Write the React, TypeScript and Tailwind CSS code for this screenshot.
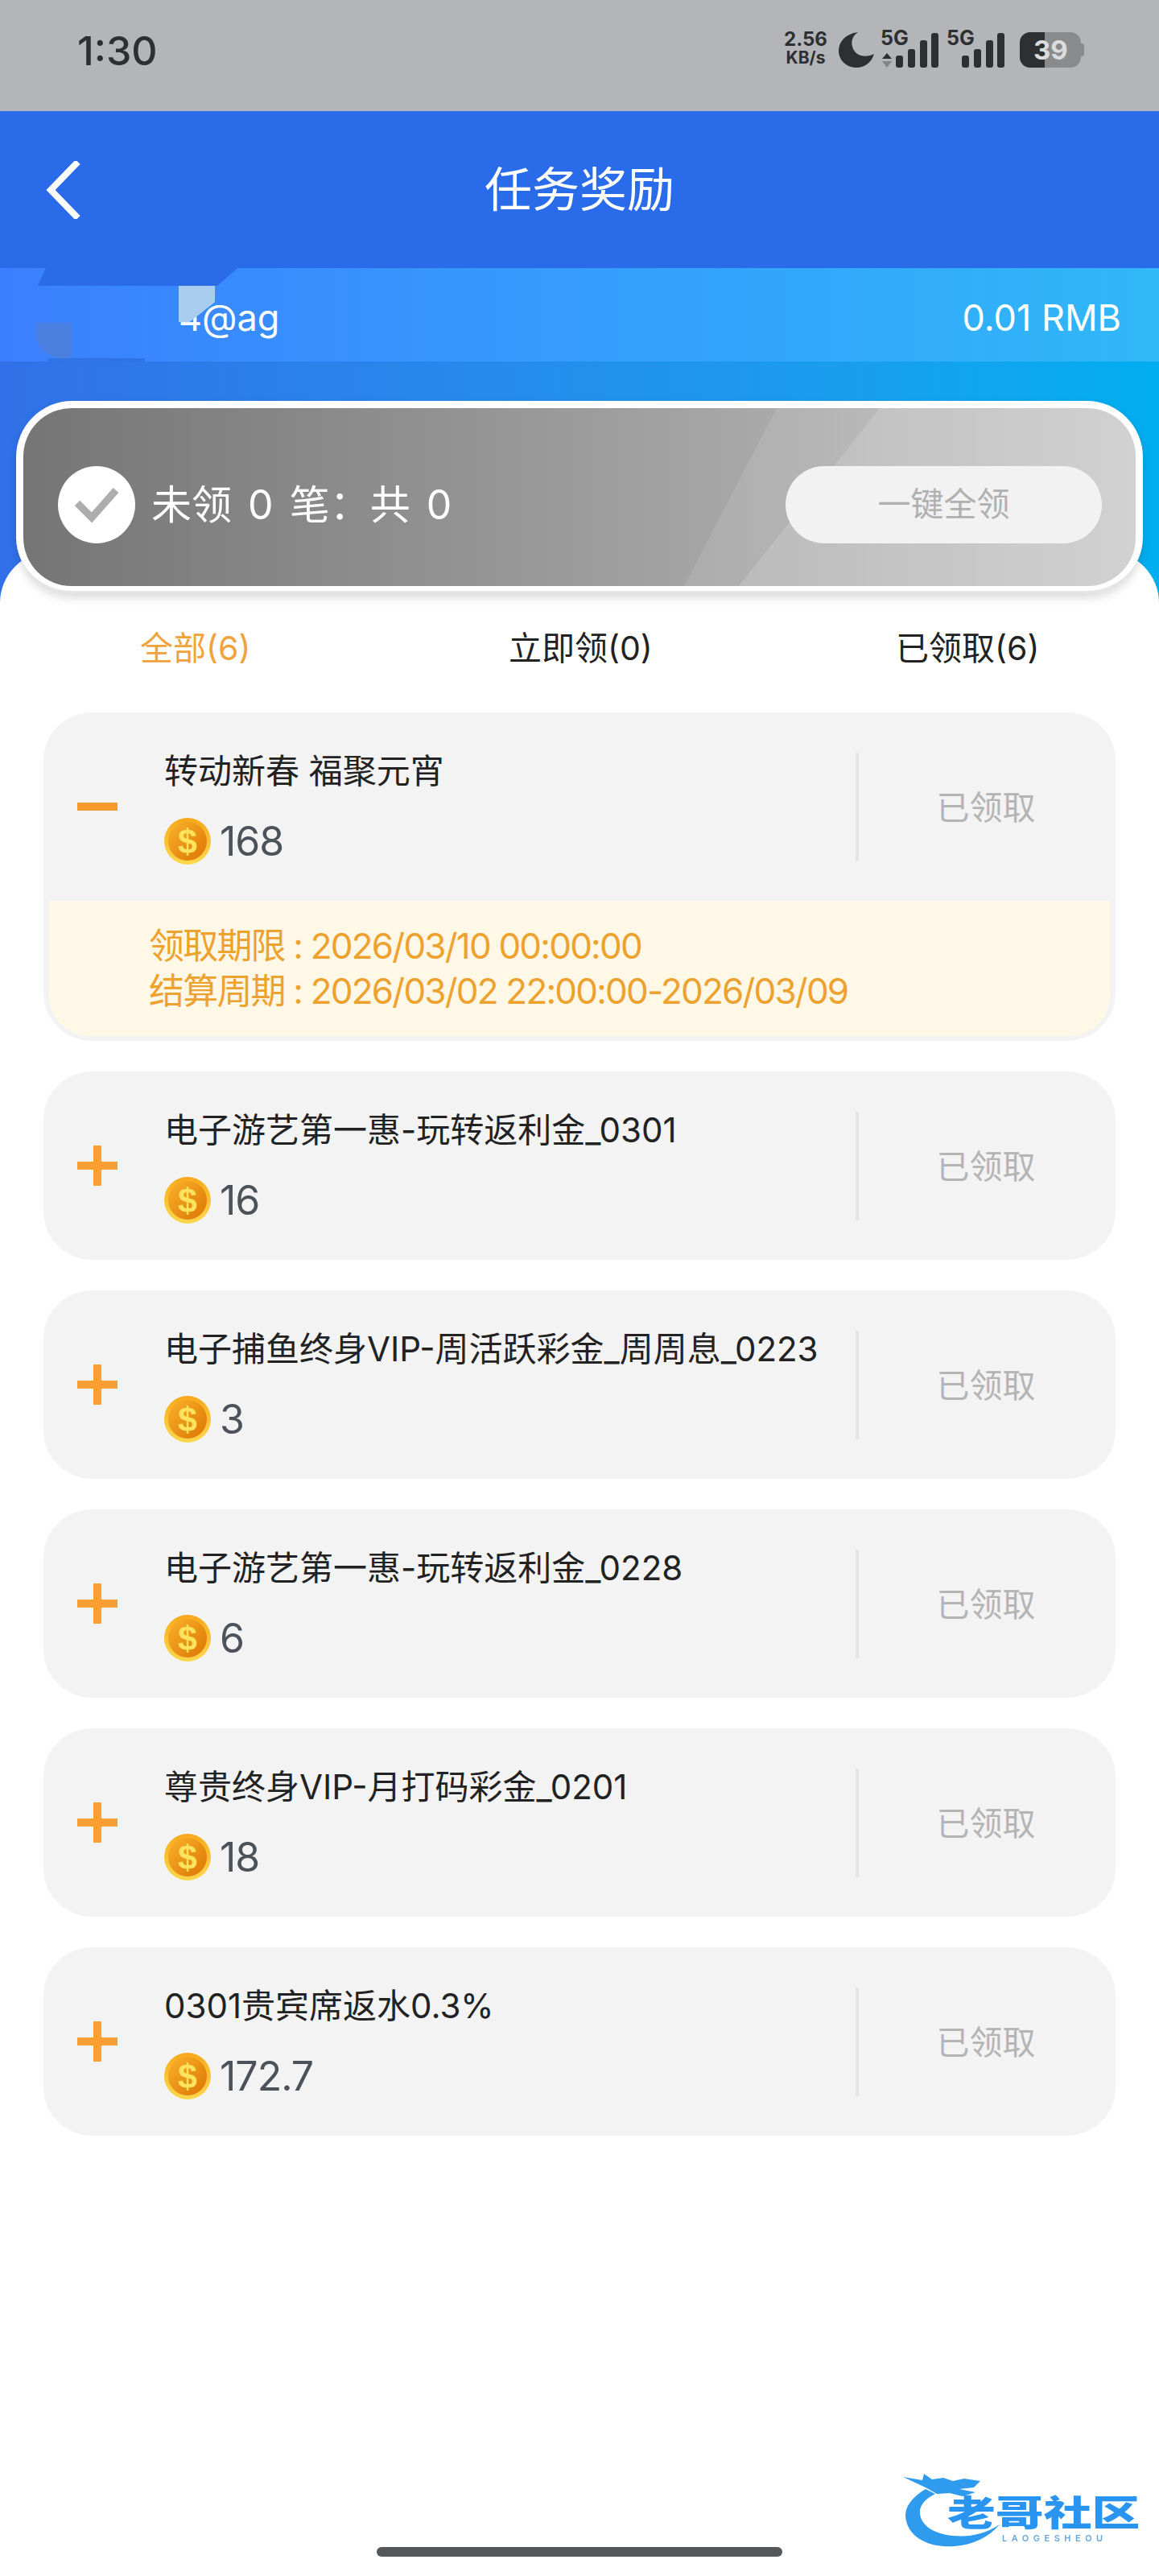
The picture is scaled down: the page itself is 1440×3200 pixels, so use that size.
import React from 'react';

const FONT = 'font-["Inter","Noto_Sans_CJK_SC",sans-serif]';

const rewards = [
  { title: '电子游艺第一惠-玩转返利金_0301', amount: '16' },
  { title: '电子捕鱼终身VIP-周活跃彩金_周周息_0223', amount: '3' },
  { title: '电子游艺第一惠-玩转返利金_0228', amount: '6' },
  { title: '尊贵终身VIP-月打码彩金_0201', amount: '18' },
  { title: '0301贵宾席返水0.3%', amount: '172.7' },
];

const SignalBars = ({ lead = false }: { lead?: boolean }) => (
  <svg width="72" height="44" viewBox="0 0 72 44" className="block">
    {lead && (
      <>
        <path d="M2 33 L8 26 L14 33 Z" fill="#2d2f30" />
        <path d="M2 36 L14 36 L8 44 Z" fill="#828486" />
      </>
    )}
    <rect x="19" y="29" width="9" height="15" rx="3" fill="#2d2f30" />
    <rect x="34" y="21" width="9" height="23" rx="3" fill="#2d2f30" />
    <rect x="49" y="10" width="9" height="34" rx="3" fill="#2d2f30" />
    <rect x="63" y="1" width="9" height="43" rx="3" fill="#2d2f30" />
  </svg>
);

const StatusIcons = () => (
  <div className="flex items-center text-[#2d2f30]">
    <div className="mt-[-4px] flex w-[58px] flex-col items-center font-bold leading-none">
      <span className="text-[24px] leading-[24px]">2.56</span>
      <span className="text-[21px] leading-[22px]">KB/s</span>
    </div>
    <svg width="44" height="44" viewBox="0 0 44 44" className="ml-[12px]">
      <path d="M24 0 C8 2 0 12 0 23 C0 35 10 44 22 44 C33 44 41 37 44 27 C32 33 20 29 17 18 C15 10 18 4 24 0 Z" fill="#2d2f30" />
    </svg>
    <div className="relative ml-[8px] h-[44px] w-[72px]">
      <SignalBars lead />
      <span className="absolute left-0 top-[-6px] text-[25px] font-bold leading-[26px]">5G</span>
    </div>
    <div className="relative ml-[10px] h-[44px] w-[72px]">
      <SignalBars />
      <span className="absolute left-0 top-[-6px] text-[25px] font-bold leading-[26px]">5G</span>
    </div>
    <div className="relative ml-[19px] flex h-[44px] w-[76px] overflow-hidden rounded-[13px] bg-[#8a8b8d]">
      <div className="h-full w-[31px] bg-[#2d2f30]" />
      <span className="absolute left-[17px] top-0 text-[33px] font-bold leading-[44px] text-[#dcdcdc]">39</span>
    </div>
    <div className="h-[16px] w-[4px] rounded-r-[3px] bg-[#8a8b8d]" />
  </div>
);

const Coin = ({ id }: { id: string }) => (
  <svg width="58" height="58" viewBox="0 0 58 58" className="shrink-0">
    <defs>
      <linearGradient id={`${id}-rim`} x1="0" y1="0" x2="0" y2="1">
        <stop offset="0" stopColor="#f7a91a" />
        <stop offset="1" stopColor="#ffd84e" />
      </linearGradient>
      <linearGradient id={`${id}-face`} x1="0" y1="0" x2="1" y2="1">
        <stop offset="0" stopColor="#f9b22a" />
        <stop offset="1" stopColor="#dc7403" />
      </linearGradient>
    </defs>
    <circle cx="29" cy="29" r="29" fill={`url(#${id}-rim)`} />
    <circle cx="29" cy="29" r="24" fill={`url(#${id}-face)`} />
    <text x="29" y="44" textAnchor="middle" fontSize="43" fontWeight="700" fill="#ffe25e" fontFamily="Liberation Sans, sans-serif">
      $
    </text>
  </svg>
);

const ToggleIcon = ({ open = false }: { open?: boolean }) => (
  <svg width="50" height="50" viewBox="0 0 50 50" className="ml-[42px] shrink-0">
    <rect x="0" y="20" width="50" height="10" fill={open ? '#f79a2d' : '#ff9f33'} />
    {!open && <rect x="20" y="0" width="10" height="50" fill="#ff9f33" />}
  </svg>
);

const RewardRow = ({ id, title, amount, open = false }: { id: string; title: string; amount: string; open?: boolean }) => (
  <div className="flex h-[234px] items-center">
    <ToggleIcon open={open} />
    <div className="ml-[58px] flex flex-1 flex-col">
      <div className="text-[42px] leading-[56px] text-[#222222]">{title}</div>
      <div className="mt-[30px] flex items-center gap-[11px]">
        <Coin id={id} />
        <span className="text-[50px] leading-[58px] tracking-[-1px] text-[#4c525a]">{amount}</span>
      </div>
    </div>
    <div className="flex h-[135px] w-[323px] items-center justify-center border-l-[4px] border-[#e4e4e4] pr-[3px] pt-[3px]">
      <span className="text-[41px] text-[#b4b4b4]">已领取</span>
    </div>
  </div>
);

const Logo = () => (
  <div className="absolute left-[1120px] top-[3066px] h-[104px] w-[304px] blur-[0.7px]">
    <svg width="304" height="104" viewBox="0 0 304 104" className="absolute inset-0">
      <path d="M30 26 C10 38 2 52 6 66 C12 90 40 99 66 97 C90 95 108 86 122 70 C104 82 84 86 64 84 C42 82 24 72 23 56 C22 46 30 38 42 32 Z" fill="#2f9bee" />
      <path d="M2 11 L26 15 L28 7 L38 14 L52 12 L64 16 L78 13 L98 16 L90 24 L72 26 L92 30 L76 35 L60 31 L44 32 L30 24 Z" fill="#2f9bee" />
    </svg>
    <span className="absolute left-[57px] top-[34px] origin-left scale-x-[1.36] whitespace-nowrap text-[44px] font-black leading-[44px] text-[#2a95f0]">
      老哥社区
    </span>
    <span className="absolute left-[125px] top-[80px] whitespace-nowrap text-[11px] font-semibold leading-[14px] tracking-[5.5px] text-[#6aa6da]">
      LAOGESHEOU
    </span>
  </div>
);

export default function App() {
  return (
    <div className={`relative flex h-[3200px] w-[1440px] flex-col overflow-hidden bg-white ${FONT}`}>
      {/* Status bar */}
      <div className="flex h-[138px] shrink-0 items-start justify-between bg-[#b4b5b9] pl-[96px] pr-[93px]">
        <span className="mt-[34px] text-[50px] font-medium leading-[58px] text-[#2d2f30]">1:30</span>
        <div className="mt-[40px]">
          <StatusIcons />
        </div>
      </div>

      {/* Header */}
      <div className="relative flex h-[195px] shrink-0 items-center justify-center bg-[#2a6bea]">
        <svg width="44" height="72" viewBox="0 0 44 72" className="absolute left-[56px] top-[62px]">
          <path d="M38 4 L7 36 L38 68" fill="none" stroke="#ffffff" strokeWidth="8" strokeLinecap="square" />
        </svg>
        <h1 className="text-[59px] font-normal leading-none text-white">任务奖励</h1>
      </div>

      {/* Gradient area */}
      <div className="h-[420px] shrink-0 bg-gradient-to-r from-[#3170e8] to-[#00aeef]">
        <div className="relative flex h-[116px] items-center justify-between bg-gradient-to-r from-[#3b7fff] to-[#30b8f8] pl-[222px] pr-[47px] pt-[6px] text-[45px] leading-none text-white">
          <span>4@ag</span>
          <span>0.01 RMB</span>
          {/* blurred-out account patches */}
          <div className="absolute left-[47px] top-0 h-[22px] w-[248px] bg-[#2a6bea] [clip-path:polygon(0_100%,4%_0,100%_0,90%_100%)]" />
          <div className="absolute left-[222px] top-[22px] h-[45px] w-[45px] bg-[#a9cdee] [clip-path:polygon(0_0,100%_0,100%_45%,30%_100%,0_100%)]" />
          <div className="absolute left-[45px] top-[68px] h-[44px] w-[44px] rounded-bl-[30px] bg-[#4a7fdf]" />
          <div className="absolute bottom-0 left-[60px] h-[4px] w-[120px] bg-[#2f74e6]" />
        </div>

        {/* Summary card */}
        <div className="relative z-10 mx-[20px] mt-[49px] h-[239px] rounded-[70px] border-b-[3px] border-[#e6e6e6] bg-white px-[9px] pb-[6px] pt-[9px] shadow-[0_6px_12px_rgba(0,0,0,0.14)]">
          <div className="relative flex h-[221px] items-center justify-between overflow-hidden rounded-[60px] bg-gradient-to-r from-[#757575] to-[#c4c4c4] pl-[43px] pr-[42px] pt-[18px]">
            <div className="absolute inset-0 bg-white/10 [clip-path:polygon(821px_100%,936px_0,100%_0,100%_100%)]" />
            <div className="absolute inset-0 bg-white/15 [clip-path:polygon(889px_100%,1064px_0,100%_0,100%_100%)]" />
            <div className="relative flex items-center">
              <div className="flex h-[96px] w-[96px] items-center justify-center rounded-full bg-white">
                <svg width="56" height="44" viewBox="0 0 56 44">
                  <path d="M4 20 L22 38 L52 4" fill="none" stroke="#adadad" strokeWidth="9" />
                </svg>
              </div>
              <span className="ml-[20px] whitespace-pre text-[50px] leading-none text-white [word-spacing:6px]">未领 0 笔：共 0</span>
            </div>
            <div className="relative flex h-[96px] w-[393px] items-center justify-center rounded-[48px] bg-[#f2f2f2] text-[41px] text-[#b0b0b0]">
              一键全领
            </div>
          </div>
        </div>
      </div>

      {/* White sheet */}
      <div className="relative mt-[-68px] flex flex-1 flex-col rounded-t-[64px] bg-white">
        <div className="relative h-[200px] shrink-0 text-[41px] leading-none text-[#222222]">
          <div className="flex h-full items-center pt-[40px]">
            <span className="ml-[174px] w-[458px] text-[#f0a33c]">全部(6)</span>
            <span className="w-[481px]">立即领(0)</span>
            <span>已领取(6)</span>
          </div>
        </div>

        <div className="mx-[54px] flex flex-col gap-[38px]">
          <div className="h-[408px] rounded-[60px] bg-[#f3f3f3]">
            <RewardRow id="coin-0" title="转动新春 福聚元宵" amount="168" open />
            <div className="mx-[7px] h-[168px] rounded-b-[50px] bg-[#fff8e6] pl-[124px] pt-[28px] text-[44px] leading-[56px] tracking-[-1.8px] text-[#eda22f]">
              <div>领取期限 : 2026/03/10 00:00:00</div>
              <div>结算周期 : 2026/03/02 22:00:00-2026/03/09</div>
            </div>
          </div>
          {rewards.map((r, i) => (
            <div key={i} className="rounded-[60px] bg-[#f3f3f3]">
              <RewardRow id={`coin-${i + 1}`} title={r.title} amount={r.amount} />
            </div>
          ))}
        </div>

        {/* Home indicator */}
        <div className="mx-auto mb-[24px] mt-auto h-[12px] w-[504px] rounded-full bg-[#55575a]" />
      </div>

      <Logo />
    </div>
  );
}
